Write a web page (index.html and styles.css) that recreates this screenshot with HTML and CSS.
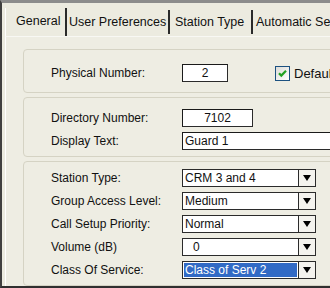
FILE: index.html
```html
<!DOCTYPE html>
<html>
<head>
<meta charset="utf-8">
<link rel="stylesheet" href="styles.css">
</head>
<body>
<div class="window">
  <div class="tabs">
    <div class="tab tab-general active">General</div>
    <div class="tab tab-user">User Preferences</div>
    <div class="tab tab-station">Station Type</div>
    <div class="tab tab-auto">Automatic Settings</div>
  </div>
  <div class="panel">
    <div class="group g1">
      <div class="row">
        <span class="label">Physical Number:</span>
        <span class="field center w-phys">2</span>
        <span class="checkbox"><svg width="11" height="11" viewBox="0 0 11 11"><path d="M2 5.2 L4.3 7.6 L9 2.8" fill="none" stroke="#21a121" stroke-width="2.2"/></svg></span>
        <span class="cklabel">Default</span>
      </div>
    </div>
    <div class="group g2">
      <div class="row">
        <span class="label">Directory Number:</span>
        <span class="field center w-dir">7102</span>
      </div>
      <div class="row">
        <span class="label">Display Text:</span>
        <span class="field w-wide">Guard 1</span>
      </div>
    </div>
    <div class="group g3">
      <div class="row">
        <span class="label">Station Type:</span>
        <span class="select"><span class="value">CRM 3 and 4</span><span class="btn"><span class="arrow"></span></span></span>
      </div>
      <div class="row">
        <span class="label">Group Access Level:</span>
        <span class="select"><span class="value">Medium</span><span class="btn"><span class="arrow"></span></span></span>
      </div>
      <div class="row">
        <span class="label">Call Setup Priority:</span>
        <span class="select"><span class="value">Normal</span><span class="btn"><span class="arrow"></span></span></span>
      </div>
      <div class="row">
        <span class="label">Volume (dB)</span>
        <span class="select"><span class="value indent">0</span><span class="btn"><span class="arrow"></span></span></span>
      </div>
      <div class="row">
        <span class="label">Class Of Service:</span>
        <span class="select"><span class="value selected">Class of Serv 2</span><span class="btn"><span class="arrow"></span></span></span>
      </div>
    </div>
  </div>
</div>
</body>
</html>
```

FILE: styles.css
```css
html, body {
  margin: 0;
  padding: 0;
}
body {
  width: 330px;
  height: 288px;
  overflow: hidden;
  background: #ecebe0;
  font-family: "Liberation Sans", Arial, sans-serif;
  font-size: 12px;
  color: #111;
}
.window {
  box-sizing: border-box;
  width: 330px;
  height: 288px;
  border-top: 3px solid #8c8c8c;
  border-left: 2px solid #404040;
  border-bottom: 2px solid #303030;
  background: #ecebe0;
  overflow: hidden;
  display: flex;
  flex-direction: column;
}
.tabs {
  display: flex;
  height: 33px;
  padding-left: 3px;
  box-sizing: border-box;
  background: #ecebe0;
  flex: none;
  white-space: nowrap;
}
.tab {
  margin-top: 7px;
  height: 24px;
  line-height: 24px;
  font-size: 12.5px;
  border-right: 2px solid #2a2a2a;
  box-sizing: border-box;
  flex: none;
  overflow: hidden;
}
.tab-general {
  width: 62px;
  padding-left: 10px;
  border-left: 1px solid #fff;
  margin-top: 5px;
  height: 28px;
  line-height: 27px;
}
.tab-user {
  width: 103px;
  padding-left: 2px;
}
.tab-station {
  width: 83px;
  padding-left: 5px;
}
.tab-auto {
  padding-left: 3px;
  border-right: none;
}
.panel {
  flex: 1;
  border-top: 1px solid #f8f8f4;
  border-left: 1px solid #fff;
  margin-left: 3px;
  padding: 12px 0 0 17px;
  display: flex;
  flex-direction: column;
  gap: 4px;
  background: #eeede3;
}
.group {
  width: 330px;
  border: 1px solid #d5d3c4;
  border-radius: 4px;
  box-sizing: border-box;
  display: flex;
  flex-direction: column;
  gap: 5px;
  padding-left: 27px;
}
.g1 {
  height: 44px;
  padding-top: 14px;
}
.g2 {
  height: 60px;
  padding-top: 11px;
}
.g3 {
  flex: 1;
  padding-top: 7px;
}
.row {
  display: flex;
  align-items: center;
  height: 18px;
}
.label {
  width: 131px;
  flex: none;
  white-space: nowrap;
}
.field {
  box-sizing: border-box;
  height: 18px;
  line-height: 16px;
  background: #fff;
  border: 1px solid #2b2b2b;
  border-top-color: #1a1a1a;
  border-left-color: #1a1a1a;
  padding: 0 2px;
  flex: none;
  white-space: nowrap;
}
.center {
  text-align: center;
}
.w-phys {
  width: 46px;
}
.w-dir {
  width: 71px;
}
.w-wide {
  width: 160px;
}
.checkbox {
  box-sizing: border-box;
  width: 15px;
  height: 15px;
  margin-left: 47px;
  border: 1px solid #1c5180;
  background: linear-gradient(135deg, #dcdcd7, #fff);
  display: flex;
  align-items: center;
  justify-content: center;
  flex: none;
}
.cklabel {
  margin-left: 4px;
  font-size: 13px;
  white-space: nowrap;
}
.select {
  box-sizing: border-box;
  width: 134px;
  height: 18px;
  border: 1px solid #2b2b2b;
  background: #fff;
  display: flex;
  flex: none;
}
.value {
  flex: 1;
  line-height: 16px;
  padding-left: 2px;
  white-space: nowrap;
  overflow: hidden;
}
.value.indent {
  padding-left: 10px;
}
.value.selected {
  background: #316ac5;
  color: #fff;
  margin: 1px;
  line-height: 14px;
  padding-left: 1px;
}
.btn {
  width: 16px;
  border-left: 1px solid #2b2b2b;
  background: #f4f3ee;
  display: flex;
  align-items: center;
  justify-content: center;
}
.arrow {
  width: 0;
  height: 0;
  border-left: 4px solid transparent;
  border-right: 4px solid transparent;
  border-top: 6px solid #000;
}
```
